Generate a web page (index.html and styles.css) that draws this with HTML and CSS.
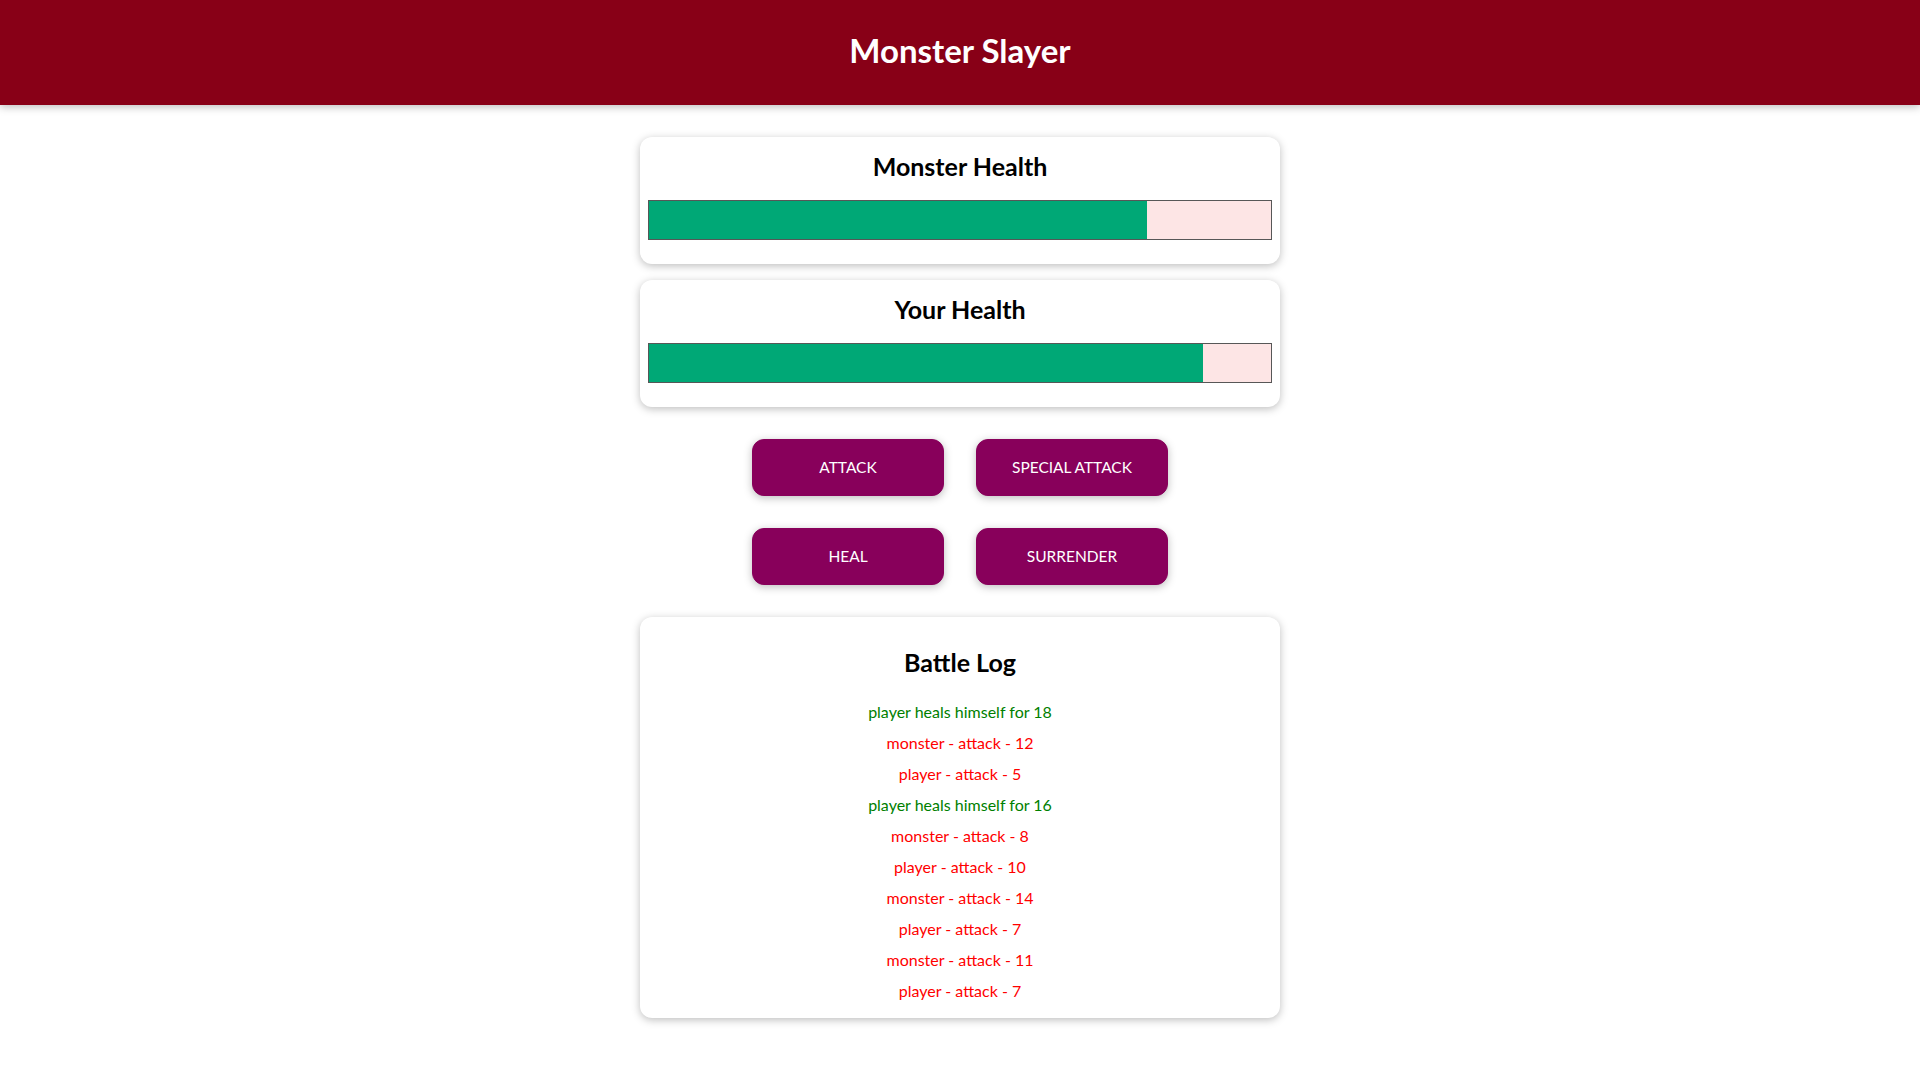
FILE: index.html
```html
<!DOCTYPE html>
<html lang="en">
<head>
<meta charset="utf-8">
<title>Monster Slayer</title>
<link rel="stylesheet" href="styles.css">
</head>
<body>
<header class="app-header">
  <h1 class="app-title">Monster Slayer</h1>
</header>
<div class="game">
  <section class="container health-card">
    <h2 class="card-title">Monster Health</h2>
    <div class="healthbar">
      <div class="healthbar__value" style="width: 80%;"></div>
    </div>
  </section>
  <section class="container health-card">
    <h2 class="card-title">Your Health</h2>
    <div class="healthbar">
      <div class="healthbar__value" style="width: 89%;"></div>
    </div>
  </section>
  <section class="controls">
    <button class="btn">ATTACK</button>
    <button class="btn">SPECIAL ATTACK</button>
    <button class="btn">HEAL</button>
    <button class="btn">SURRENDER</button>
  </section>
  <section class="container log">
    <h2 class="log-title">Battle Log</h2>
    <ul class="log-list">
      <li class="log-heal">player heals himself for 18</li>
      <li class="log-damage">monster - attack - 12</li>
      <li class="log-damage">player - attack - 5</li>
      <li class="log-heal">player heals himself for 16</li>
      <li class="log-damage">monster - attack - 8</li>
      <li class="log-damage">player - attack - 10</li>
      <li class="log-damage">monster - attack - 14</li>
      <li class="log-damage">player - attack - 7</li>
      <li class="log-damage">monster - attack - 11</li>
      <li class="log-damage">player - attack - 7</li>
    </ul>
  </section>
</div>
</body>
</html>
```
FILE: styles.css
```css
* {
  box-sizing: border-box;
}

html {
  font-family: "Lato", "Noto Sans", sans-serif;
}

body {
  margin: 0;
  background: #ffffff;
  color: #000;
}

.app-header {
  padding: 0.5rem;
  background-color: #880017;
  color: #ffffff;
  text-align: center;
  margin-bottom: 2rem;
  box-shadow: 0 2px 8px rgba(0, 0, 0, 0.26);
}

.app-title {
  font-size: 33px;
  line-height: 46px;
  font-weight: 700;
  margin: 19px 0 24px;
}

.game section {
  width: 90%;
  max-width: 40rem;
  margin-left: auto;
  margin-right: auto;
}

.container {
  text-align: center;
  padding: 0.5rem;
  box-shadow: 0 2px 8px rgba(0, 0, 0, 0.26);
  margin: 1rem auto;
  border-radius: 12px;
  background: #fff;
}

.game .health-card {
  margin-top: 16px;
  margin-bottom: 16px;
}

.card-title {
  font-size: 25px;
  line-height: 35px;
  font-weight: 700;
  margin: 4px 0 0;
}

.healthbar {
  width: 100%;
  height: 40px;
  border: 1px solid #575757;
  margin: 1rem 0;
  background: #fde5e5;
}

.healthbar__value {
  background-color: #00a876;
  height: 100%;
}

.controls {
  display: flex;
  justify-content: center;
  flex-wrap: wrap;
}

.btn {
  font: inherit;
  font-size: 15.5px;
  line-height: 23px;
  border: 1px solid #88005b;
  background-color: #88005b;
  color: #ffffff;
  padding: 1rem 2rem;
  border-radius: 12px;
  margin: 1rem;
  width: 12rem;
  cursor: pointer;
  box-shadow: 0 2px 8px rgba(0, 0, 0, 0.26);
}

.game .log {
  margin-top: 16px;
  margin-bottom: 16px;
}

.log-title {
  font-size: 25px;
  line-height: 35px;
  font-weight: 700;
  margin: 20px 0;
}

.log-list {
  list-style: none;
  margin: 0;
  padding: 0;
}

.log-list li {
  margin: 0.5rem 0;
  font-size: 16px;
  line-height: 23px;
}

.log-heal {
  color: #008000;
}

.log-damage {
  color: #ff0000;
}
```
